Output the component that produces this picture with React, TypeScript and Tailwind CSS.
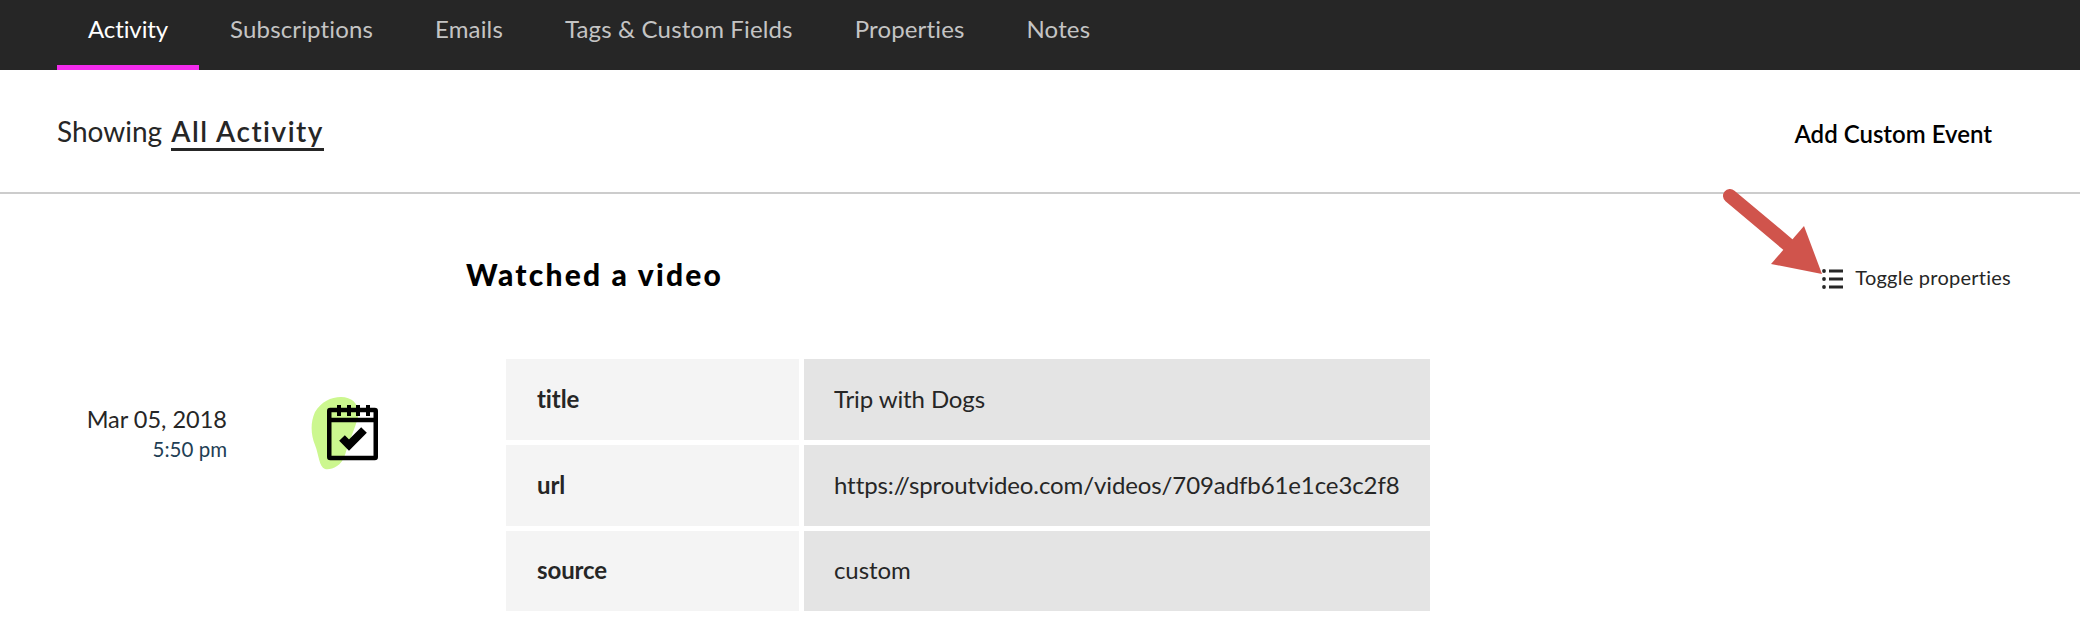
const tabs = ['Activity', 'Subscriptions', 'Emails', 'Tags & Custom Fields', 'Properties', 'Notes']

const rows = [
  { label: 'title', value: 'Trip with Dogs' },
  { label: 'url', value: 'https://sproutvideo.com/videos/709adfb61e1ce3c2f8' },
  { label: 'source', value: 'custom' },
]

function CalendarIcon() {
  return (
    <svg width="72" height="74" viewBox="0 0 72 74" className="shrink-0">
      {/* green blob behind the calendar */}
      <path d="M30 0C42 0 49 8 47 20C44 32 38 44 34 58C30 70 20 73 14 72C8 70 8 58 4 48C0 38 -1 26 4 15C10 5 20 0 30 0Z" fill="#ccf78f" />
      <g fill="none" stroke="#000" strokeWidth="4.500" strokeLinejoin="round">
        <rect x="18.250" y="13" width="46.500" height="48" rx="1" />
        <path d="M18 23H65" />
      </g>
      <path d="M28 8V19M38 8V19M47 8V19M57 8V19" stroke="#000" strokeWidth="4" />
      <path d="M31 41L38 48L53 33" fill="none" stroke="#000" strokeWidth="8" />
    </svg>
  )
}

function ListIcon() {
  return (
    <svg width="22" height="22" viewBox="0 0 22 22" className="mt-[3px] ml-[1px] shrink-0">
      <circle cx="2" cy="3" r="1.900" fill="#262626" />
      <circle cx="2" cy="11" r="1.900" fill="#262626" />
      <circle cx="2" cy="19" r="1.900" fill="#262626" />
      <path d="M7 3H21M7 11H21M7 19H21" stroke="#262626" strokeWidth="3" />
    </svg>
  )
}

function Arrow() {
  return (
    <svg width="110" height="100" viewBox="0 0 110 100" className="absolute left-[1720px] top-[186px]">
      <path d="M10 10L72 62" stroke="#d0544c" strokeWidth="14" strokeLinecap="round" />
      <path d="M84 40L102 88L51 78Z" fill="#d0544c" />
    </svg>
  )
}

export default function App() {
  return (
    <div className="relative min-h-[636px] bg-white font-['Lato',sans-serif] text-[#262626]">
      <nav className="flex h-[70px] bg-[#262626] pl-[57px]">
        {tabs.map((tab, i) => (
          <a
            key={tab}
            className={
              i === 0
                ? 'flex items-center border-b-[5px] border-[#f22bec] px-[31px] pb-[7px] text-[24px] tracking-[-0.1px] text-white'
                : 'flex items-center px-[31px] pb-[12px] text-[24px] tracking-[0.15px] text-[#c4c4c4]'
            }
          >
            {tab}
          </a>
        ))}
      </nav>

      <div className="flex h-[124px] items-center justify-between border-b-2 border-[#cccccc] pl-[57px] pr-[88px]">
        <div className="text-[28px]">
          Showing{' '}
          <span className="ml-[2px] border-b-[3px] border-[#262626] font-semibold tracking-[1.500px]">All Activity</span>
        </div>
        <button className="pt-[5px] text-[24px] font-semibold text-black">Add Custom Event</button>
      </div>

      <div className="flex items-center justify-between pl-[466px] pr-[69px] pt-[58px]">
        <h2 className="text-[30px] font-black tracking-[2.200px] text-black">Watched a video</h2>
        <div className="flex items-center gap-[11px] pt-[5px] text-[20px] tracking-[0.25px]">
          <ListIcon />
          Toggle properties
        </div>
      </div>

      <div className="flex pl-[88px] pt-[62px]">
        <div className="mt-[45px] flex w-[139px] flex-col items-end self-start whitespace-nowrap">
          <span className="text-[23.500px] leading-[30px]">Mar 05, 2018</span>
          <span className="text-[20.500px] leading-[30px] text-[#1f3f55]">5:50 pm</span>
        </div>
        <div className="ml-[84px] mr-[123px] mt-[38px] self-start">
          <CalendarIcon />
        </div>
        <div className="grid grid-cols-[293px_auto] grid-rows-[81px_81px_80px] gap-[5px] text-[24px] tracking-[-0.1px]">
          {rows.map((row) => (
            <div key={row.label} className="contents">
              <div className="flex items-center bg-[#f4f4f4] px-[31px] pb-[2px] font-bold">{row.label}</div>
              <div className="flex items-center bg-[#e4e4e4] px-[30px] pb-[2px]">{row.value}</div>
            </div>
          ))}
        </div>
      </div>

      <Arrow />
    </div>
  )
}
